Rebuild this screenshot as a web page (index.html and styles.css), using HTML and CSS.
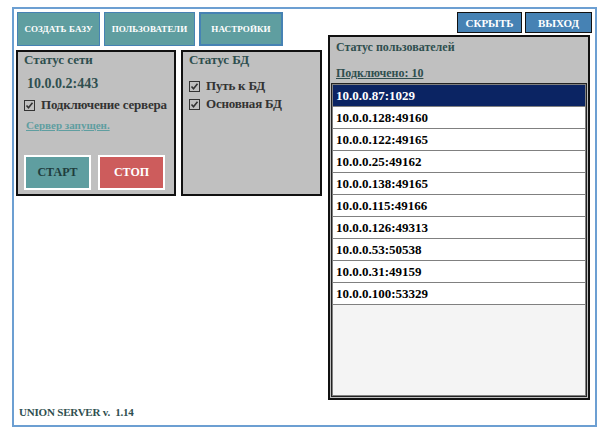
FILE: index.html
```html
<!DOCTYPE html>
<html lang="ru">
<head>
<meta charset="utf-8">
<title>Union Server</title>
<link rel="stylesheet" href="styles.css">
</head>
<body>
<div class="frame">
  <div class="main">
    <div class="left">
      <div class="tabs">
        <button class="tab w1">СОЗДАТЬ БАЗУ</button>
        <button class="tab w2">ПОЛЬЗОВАТЕЛИ</button>
        <button class="tab w3 focused">НАСТРОЙКИ</button>
      </div>
      <div class="panels">
        <div class="panel net">
          <div class="title">Статус сети</div>
          <div class="addr">10.0.0.2:443</div>
          <div class="check first">
            <svg class="cb" width="11" height="11" viewBox="0 0 11 11"><rect x="0.5" y="0.5" width="10" height="10" fill="none" stroke="#333" stroke-width="1"/><path d="M2.5 5.5 L4.5 7.8 L8.5 2.8" fill="none" stroke="#333" stroke-width="1.6"/></svg>
            <span>Подключение сервера</span>
          </div>
          <div class="status">Сервер запущен.</div>
          <div class="actions">
            <button class="act start">СТАРТ</button>
            <button class="act stop">СТОП</button>
          </div>
        </div>
        <div class="panel db">
          <div class="title">Статус БД</div>
          <div class="check db1">
            <svg class="cb" width="11" height="11" viewBox="0 0 11 11"><rect x="0.5" y="0.5" width="10" height="10" fill="none" stroke="#333" stroke-width="1"/><path d="M2.5 5.5 L4.5 7.8 L8.5 2.8" fill="none" stroke="#333" stroke-width="1.6"/></svg>
            <span>Путь к БД</span>
          </div>
          <div class="check db2">
            <svg class="cb" width="11" height="11" viewBox="0 0 11 11"><rect x="0.5" y="0.5" width="10" height="10" fill="none" stroke="#333" stroke-width="1"/><path d="M2.5 5.5 L4.5 7.8 L8.5 2.8" fill="none" stroke="#333" stroke-width="1.6"/></svg>
            <span>Основная БД</span>
          </div>
        </div>
      </div>
    </div>
    <div class="right">
      <div class="topbtns">
        <button class="tb hide">СКРЫТЬ</button>
        <button class="tb exit">ВЫХОД</button>
      </div>
      <div class="users">
        <div class="utitle">Статус пользователей</div>
        <div class="count">Подключено: 10</div>
        <div class="list">
          <div class="row sel">10.0.0.87:1029</div>
          <div class="row">10.0.0.128:49160</div>
          <div class="row">10.0.0.122:49165</div>
          <div class="row">10.0.0.25:49162</div>
          <div class="row">10.0.0.138:49165</div>
          <div class="row">10.0.0.115:49166</div>
          <div class="row">10.0.0.126:49313</div>
          <div class="row">10.0.0.53:50538</div>
          <div class="row">10.0.0.31:49159</div>
          <div class="row">10.0.0.100:53329</div>
        </div>
      </div>
    </div>
  </div>
  <div class="footer">UNION SERVER v.  1.14</div>
</div>
</body>
</html>
```

FILE: styles.css
```css
* { box-sizing: border-box; }
html, body { margin: 0; padding: 0; background: #ffffff; }
body {
  font-family: "Liberation Serif", "Times New Roman", serif;
  font-weight: bold;
  width: 611px;
  height: 438px;
  overflow: hidden;
}
button {
  font-family: "Liberation Serif", "Times New Roman", serif;
  font-weight: bold;
  padding: 0;
  margin: 0;
  cursor: pointer;
}
.frame {
  margin: 7px 0 0 12px;
  width: 585px;
  height: 420px;
  border: 2px solid #6c9fd2;
  display: flex;
  flex-direction: column;
}
.main {
  display: flex;
  gap: 6px;
}
.left {
  padding-left: 2px;
  padding-top: 3px;
  width: 308px;
}
.tabs {
  display: flex;
  gap: 4px;
  margin-left: 1px;
  height: 34px;
}
.tab {
  height: 34px;
  background: #5f9ea0;
  color: #ffffff;
  border: 1px solid #4682b4;
  font-size: 9px;
  letter-spacing: 0.1px;
}
.tab.focused { border: 2px solid #4682b4; }
.w1 { width: 83px; }
.w2 { width: 91px; }
.w3 { width: 84px; }
.panels {
  display: flex;
  gap: 5px;
  margin-top: 4px;
}
.panel {
  background: #c0c0c0;
  border: 2px solid #111111;
  height: 146px;
}
.net { width: 160px; padding: 0 0 0 6px; }
.db { width: 141px; padding: 0 0 0 6px; }
.title {
  color: #2f4f4f;
  font-size: 13px;
  line-height: 16px;
}
.addr {
  color: #2f4f4f;
  font-size: 14px;
  line-height: 16px;
  margin: 8px 0 0 3px;
}
.check {
  display: flex;
  align-items: center;
  gap: 6px;
  color: #333333;
  font-size: 13px;
  line-height: 16px;
  letter-spacing: -0.2px;
}
.check.first { margin-top: 5px; }
.db1 { margin-top: 10px; }
.db2 { margin-top: 2px; }
.cb { flex: none; }
.status {
  color: #5f9ea0;
  text-decoration: underline;
  font-size: 11px;
  line-height: 14px;
  margin: 5px 0 0 2px;
}
.actions {
  display: flex;
  gap: 7px;
  margin-top: 23px;
}
.act {
  height: 35px;
  border: 2px solid #ffffff;
  font-size: 12px;
}
.start { width: 67px; background: #5f9ea0; color: #1f3d3d; }
.stop { width: 67px; background: #cd5c5c; color: #ffffff; }
.right {
  width: 266px;
  padding-top: 3px;
  display: flex;
  flex-direction: column;
}
.topbtns {
  display: flex;
  justify-content: flex-end;
  gap: 3px;
  height: 21px;
  padding-right: 2px;
}
.tb {
  height: 21px;
  background: #4682b4;
  color: #ffffff;
  border: 1px solid #111111;
  font-size: 11px;
}
.hide { width: 65px; }
.exit { width: 67px; }
.users {
  margin-top: 2px;
  width: 262px;
  height: 365px;
  background: #c0c0c0;
  border: 2px solid #111111;
  display: flex;
  flex-direction: column;
  padding: 0 1px 1px 1px;
}
.utitle {
  color: #2f4f4f;
  font-size: 12px;
  line-height: 16px;
  margin: 2px 0 0 5px;
}
.count {
  color: #2f4f4f;
  font-size: 12px;
  line-height: 16px;
  text-decoration: underline;
  margin: 10px 0 0 5px;
}
.list {
  margin-top: 2px;
  flex: 1;
  background: #f4f4f4;
  border: 1px solid #222222;
  padding: 1px;
  box-shadow: inset 0 0 0 1px #808080;
}
.row {
  height: 22px;
  line-height: 21px;
  background: #ffffff;
  color: #000000;
  font-size: 13px;
  padding-left: 3px;
  border-bottom: 1px solid #808080;
}
.row.sel {
  background: #0b2463;
  color: #ffffff;
}
.footer {
  margin-top: auto;
  margin-bottom: 6px;
  padding-left: 5px;
  color: #2f4f4f;
  font-size: 11px;
  line-height: 14px;
  white-space: pre;
  letter-spacing: -0.2px;
}
```
